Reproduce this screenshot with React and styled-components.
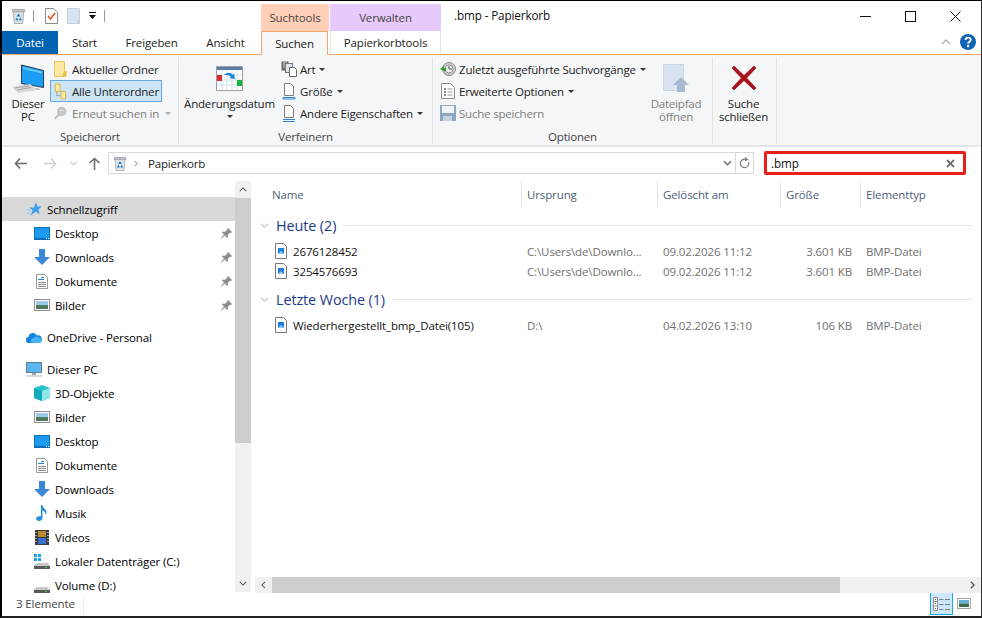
import React from 'react';
import styled, { createGlobalStyle } from 'styled-components';

const Global = createGlobalStyle`
  html, body { margin: 0; padding: 0; background: #fff; overflow: hidden; }
  * { box-sizing: border-box; }
`;

const Win = styled.div`
  width: 982px; height: 618px; display: flex; flex-direction: column;
  background: #fff; overflow: hidden;
  border-top: 1px solid #000; border-left: 2px solid #000; border-right: 1px solid #333; border-bottom: 2px solid #222;
  font-family: "Open Sans", "Noto Sans", sans-serif; font-size: 11.5px; color: #111; letter-spacing: -0.12px;
`;
const TitleBar = styled.div`height: 30px; display: flex; align-items: flex-start; flex: none;`;
const Qat = styled.div`width: 259px; height: 30px; display: flex; align-items: center; padding: 0 0 0 9px;`;
const QatSep = styled.div`width: 1px; height: 12px; background: #9a9a9a; margin: ${p => p.$m};`;
const QatIcon = styled.div`display: flex; margin: ${p => p.$m || 0};`;
const ContextTab = styled.div`
  width: ${p => p.$w}px; height: 27px; margin: 3px ${p => p.$mr || 0}px 0 0; background: ${p => p.$bg};
  display: flex; align-items: center; justify-content: center; color: #444;
`;
const Title = styled.div`margin: 6px 0 0 13px; color: #111; font-size: 11.7px; flex: 1; line-height: 17px;`;
const WinControls = styled.div`display: flex; width: 135px; height: 30px; margin-right: 3px;`;
const WinBtn = styled.div`flex: 1; display: flex; align-items: center; justify-content: center;`;

const TabBar = styled.div`
  height: 24px; flex: none; display: flex; align-items: stretch; border-bottom: 1px solid #f5a46a; position: relative;
`;
const FileTab = styled.div`width: 56px; background: #0063b1; color: #fff; display: flex; align-items: center; justify-content: center; height: 23px;`;
const Tab = styled.div`
  width: ${p => p.$w}px; height: ${p => p.$active ? 24 : 23}px; display: flex; align-items: center; justify-content: center;
  margin-left: ${p => p.$ml || 0}px; color: #222;
  ${p => p.$active && `border: 1px solid #f5a46a; border-bottom: 0; background: #f5f6f7; z-index: 1;`}
  ${p => p.$faint && `border-left: 1px solid #e8e8e8; border-right: 1px solid #e8e8e8;`}
`;
const RibbonRight = styled.div`margin-left: auto; display: flex; align-items: center; gap: 9px; padding: 0 5px 0 0; height: 22px;`;

const Ribbon = styled.div`height: 92px; flex: none; display: flex; background: #f5f6f7; border-bottom: 2px solid #e4e5e6; padding-top: 2px; letter-spacing: -0.2px;`;
const Group = styled.div`
  width: ${p => p.$w}px; height: 87px; flex: none; border-right: 1px solid #e1e2e3; padding-top: 1px;
  display: flex; flex-direction: column;
`;
const GroupBody = styled.div`height: 70px; flex: none; display: flex;`;
const GroupLabel = styled.div`height: 16px; line-height: 18px; flex: none; text-align: center; color: #444;`;
const BigBtn = styled.div`
  width: ${p => p.$w}px; height: 70px; display: flex; flex-direction: column; align-items: center; flex: none;
  color: ${p => p.$off ? '#7d7d7d' : '#222'}; margin-left: ${p => p.$ml || 0}px; text-align: center; line-height: 13px; white-space: nowrap;
`;
const BigIcon = styled.div`height: 39px; padding-top: ${p => p.$t}px; display: flex; justify-content: center; flex: none;`;
const BigCaret = styled.div`display: flex; margin-top: 5px;`;
const Col = styled.div`display: flex; flex-direction: column; flex: none; width: ${p => p.$w}px; margin-left: ${p => p.$ml || 0}px;`;
const SmallBtn = styled.div`
  height: 22px; display: flex; align-items: center; gap: ${p => p.$gap ?? 4}px; padding-left: ${p => p.$pl ?? 4}px; white-space: nowrap;
  color: ${p => p.$off ? '#7d7d7d' : '#222'};
  ${p => p.$sel && `background: #cce4f7; border: 1px solid #66a7e0; padding-left: ${(p.$pl ?? 4) - 1}px;`}
`;
const Caret = styled.span`
  display: inline-block; width: 0; height: 0; border: 3px solid transparent; border-top: 3px solid ${p => p.$off ? '#aaa' : '#333'}; border-bottom: 0;
  margin-left: ${p => p.$ml ?? 1}px;
`;
const SmallIconBox = styled.div`width: ${p => p.$w || 16}px; display: flex; justify-content: center; flex: none;`;

const AddressRow = styled.div`height: 33px; flex: none; display: flex; align-items: center; padding: 0 14px 1px 0;`;
const NavBtns = styled.div`width: 106px; display: flex; align-items: center; padding-left: 12px; flex: none;`;
const NavBtn = styled.div`display: flex; margin-right: ${p => p.$mr}px;`;
const AddressBox = styled.div`
  width: 646px; height: 22px; border: 1px solid #d9d9d9; display: flex; align-items: center; padding-left: 4px; flex: none; color: #222; letter-spacing: -0.2px;
`;
const CrumbSep = styled.div`display: flex; margin-left: 7px;`;
const Crumb = styled.span`margin-left: 10px;`;
const AddressEnd = styled.div`margin-left: auto; display: flex; align-items: center; height: 20px; gap: 3px;`;
const RefreshCell = styled.div`width: 18px; height: 20px; border-left: 1px solid #d9d9d9; display: flex; align-items: center; justify-content: center;`;
const SearchBox = styled.div`
  margin-left: 10px; width: 202px; height: 24px; border: 3px solid #e8201a; border-radius: 2px; display: flex; align-items: center;
  justify-content: space-between; padding: 0 8px 0 4px; color: #111; font-size: 11.7px; flex: none;
`;

const Main = styled.div`flex: 1; min-height: 0; display: flex;`;
const NavPane = styled.div`width: 233px; flex: none; overflow: hidden; padding-top: 17px;`;
const NavRow = styled.div`
  height: 24px; display: flex; align-items: center; position: relative; white-space: nowrap; color: #000;
  padding-left: ${p => p.$l ? 32 : 24}px; margin-top: ${p => p.$gap ? 8 : 0}px; background: ${p => p.$sel ? '#d9d9d9' : 'transparent'};
`;
const NavIcon = styled.div`width: 16px; height: 16px; margin-right: 5px; display: flex; align-items: center; justify-content: center; flex: none;`;
const PinSlot = styled.div`margin-left: auto; margin-right: 3px; display: flex;`;

const VScroll = styled.div`
  width: 16px; flex: none; margin: 1px 0 3px 0; background: #f0f0f0; display: flex; flex-direction: column;
`;
const SBtn = styled.div`height: 17px; display: flex; align-items: center; justify-content: center; flex: none;`;
const VThumb = styled.div`height: 245px; background: #cdcdcd; flex: none;`;
const Grow = styled.div`flex: 1;`;

const Content = styled.div`flex: 1; min-width: 0; margin-left: 2px; display: flex; flex-direction: column; position: relative;`;
const Cols = `display: grid; grid-template-columns: 268px 136px 123px 80px 1fr;`;
const HeaderRow = styled.div`${Cols} height: 25px; margin-top: 2px; flex: none; color: #4c607a;`;
const HeaderCell = styled.div`
  display: flex; align-items: center; padding: 0 0 0 5px; height: 25px;
  ${p => p.$first ? 'padding-left: 19px;' : 'border-left: 1px solid #e5e5e5;'}
`;
const Groups = styled.div`flex: 1; min-height: 0; overflow: hidden;`;
const GroupHead = styled.div`
  height: 24px; display: flex; align-items: center; margin-top: ${p => p.$mt}px; color: #1e3a8a; font-size: 14.4px; letter-spacing: -0.1px; padding: 0 9px 0 7px;
`;
const Chevron = styled.div`width: 16px; display: flex; flex: none;`;
const GroupLine = styled.div`flex: 1; height: 1px; background: #e5e5e5; margin-left: 7px;`;
const FileRow = styled.div`${Cols} height: 20px; align-items: center; margin-top: ${p => p.$mt || 0}px; color: #707070;`;
const NameCell = styled.div`display: flex; align-items: center; padding-left: 22px; color: #111;`;
const FileIconBox = styled.div`display: flex; margin-right: 6px;`;
const Cell = styled.div`padding-left: 6px; text-align: ${p => p.$r ? 'right' : 'left'}; padding-right: ${p => p.$r ? 8 : 0}px;`;
const HScroll = styled.div`height: 16px; margin: 0 0 2px 2px; background: #f0f0f0; flex: none; display: flex; align-items: center;`;
const HBtn = styled.div`width: 17px; height: 16px; display: flex; align-items: center; justify-content: center; flex: none;`;
const HThumb = styled.div`width: 568px; height: 16px; background: #cdcdcd; flex: none;`;

const StatusBar = styled.div`height: 21px; flex: none; display: flex; align-items: flex-start; padding-left: 14px; color: #444;`;
const StatusText = styled.div`width: 68px; border-right: 1px solid #eee; height: 20px; line-height: 17px;`;
const ViewBtns = styled.div`margin: -3px 8px 0 auto; display: flex; align-items: center;`;
const ViewBtn = styled.div`
  width: ${p => p.$w}px; height: 23px; display: flex; align-items: center; justify-content: center; margin-right: ${p => p.$mr || 0}px;
  ${p => p.$on && `background: #cce8ff; border: 1px solid #26a0da;`}
`;

/* ---------- icons ---------- */
const TrashIcon = ({ s = 16 }) => (
  <svg width={s} height={s + 1} viewBox="0 0 16 17">
    <path d="M2.500 3.500h11l-1 13h-9z" fill="#dfe2e5" stroke="#a9adb1" />
    <path d="M1.500 1.500h13v2.500h-13z" fill="#c3c7cb" stroke="#a0a4a8" />
    <path d="M8 6l2.200 3H5.800zM4.500 13l1.700-3 1.700 3zM11.500 13H8.300l1.700-3z" fill="#1878d0" />
  </svg>
);
const CheckDoc = () => (
  <svg width="13" height="16" viewBox="0 0 13 16">
    <path d="M.5.5h8l4 4v11H.5z" fill="#fff" stroke="#8a8a8a" />
    <path d="M3 8l2.500 3L10 5" fill="none" stroke="#e2531c" strokeWidth="1.400" />
  </svg>
);
const BlankDoc = () => (
  <svg width="13" height="16" viewBox="0 0 13 16">
    <path d="M.5.5h12v15H.5z" fill="#d8e2f0" stroke="#c5d2e4" />
    <path d="M10 12h3v4h-3z" fill="#c3cfdf" />
  </svg>
);
const QatCaret = () => (
  <svg width="9" height="8" viewBox="0 0 9 8"><path d="M1 0h7v1H1z" fill="#111" /><path d="M1 3h7L4.500 7z" fill="#111" /></svg>
);
const Minimize = () => <svg width="11" height="11" viewBox="0 0 11 11"><path d="M0 5.500h11" stroke="#111" /></svg>;
const Maximize = () => <svg width="11" height="11" viewBox="0 0 11 11"><rect x=".5" y=".5" width="10" height="10" fill="none" stroke="#111" /></svg>;
const CloseX = () => <svg width="11" height="11" viewBox="0 0 11 11"><path d="M.5.5l10 10M10.500.5l-10 10" stroke="#111" /></svg>;
const HelpIcon = () => (
  <svg width="16" height="16" viewBox="0 0 16 16">
    <circle cx="8" cy="8" r="8" fill="#0f63b4" />
    <path d="M5.500 6c0-3.200 5.200-3.200 5.200-.3 0 2-2.600 2-2.600 4" fill="none" stroke="#fff" strokeWidth="1.800" />
    <rect x="7" y="11" width="2.200" height="2.200" fill="#fff" />
  </svg>
);
const ChevUp = ({ c = '#b0b0b0', w = 10, h = 6 }) => (
  <svg width={w} height={h} viewBox="0 0 10 6"><path d="M1 5l4-4 4 4" fill="none" stroke={c} strokeWidth="1.300" /></svg>
);
const ChevDown = ({ c = '#707070', w = 10, h = 6, sw = 1.3 }) => (
  <svg width={w} height={h} viewBox="0 0 10 6"><path d="M1 1l4 4 4-4" fill="none" stroke={c} strokeWidth={sw} /></svg>
);
const ChevRight = ({ c = '#707070', sw = 1.3, w = 6, h = 10 }) => (
  <svg width={w} height={h} viewBox="0 0 6 10"><path d="M1 1l4 4-4 4" fill="none" stroke={c} strokeWidth={sw} /></svg>
);
const ChevLeft = ({ c = '#707070', sw = 1.3, w = 6, h = 10 }) => (
  <svg width={w} height={h} viewBox="0 0 6 10"><path d="M5 1L1 5l4 4" fill="none" stroke={c} strokeWidth={sw} /></svg>
);
const PcBig = () => (
  <svg width="34" height="29" viewBox="0 0 34 29">
    <path d="M10.500 1l22 5.500v17l-22-4z" fill="#1a9df2" stroke="#2a3f50" strokeWidth="1" />
    <path d="M12 3l19 4.500v2L12 5z" fill="#66c8fb" />
    <path d="M24 24l5 1-1 1-5-1z" fill="#9a9a9a" />
    <path d="M1 23l18-3 8 6-20 3z" fill="#d6d6d6" />
    <path d="M4 24l14-2M6 26l14-2.500" stroke="#a8a8a8" />
  </svg>
);
const FolderOne = () => (
  <svg width="13" height="16" viewBox="0 0 13 16">
    <path d="M.5.5h10v15H.5z" fill="#fde9a3" stroke="#e7c560" />
    <path d="M10 10h2.500v5.500H8z" fill="#f0c040" />
  </svg>
);
const FolderSub = () => (
  <svg width="14" height="17" viewBox="0 0 14 17">
    <path d="M1.500.5h5v8h-5z" fill="#fde9a3" stroke="#d9b040" />
    <path d="M7.500 8.500h5v8h-5z" fill="#fde9a3" stroke="#d9b040" />
    <path d="M3 9v4h4" fill="none" stroke="#999" />
  </svg>
);
const SearchAgain = () => (
  <svg width="16" height="16" viewBox="0 0 16 16">
    <circle cx="9.500" cy="6" r="5" fill="#c8c8c8" stroke="#b3b3b3" />
    <path d="M6 10l-5 5" stroke="#bdbdbd" strokeWidth="2.400" />
    <path d="M7 5h5" stroke="#eee" />
  </svg>
);
const CalendarIcon = () => (
  <svg width="27" height="25" viewBox="0 0 27 25">
    <rect x=".5" y=".5" width="26" height="24" fill="#fff" stroke="#9aa0a6" />
    <rect x="1" y="1" width="25" height="3" fill="#5b7ea8" />
    <path d="M1 9h25M1 14h25M1 19h25M6 4v20M11 4v20M16 4v20M21 4v20" stroke="#cfe0ee" />
    <rect x="1" y="9" width="5" height="6" fill="#d92e2e" />
    <rect x="21" y="14" width="5" height="6" fill="#1db33a" />
    <path d="M8 9c3-3 7-3 9 0l1-2 1 6-6-1 2-1c-2-2-4-2-7-2z" fill="#1e88d8" />
  </svg>
);
const ArtIcon = () => (
  <svg width="16" height="16" viewBox="0 0 16 16">
    <rect x=".5" y=".5" width="7" height="9" fill="#666" />
    <path d="M2 2h4M2 4h4M2 6h4" stroke="#ddd" />
    <rect x="4.500" y="2.500" width="7" height="9" fill="#dfe4ea" stroke="#777" />
    <path d="M8.500 6.500h5l2 2v7h-7z" fill="#fff" stroke="#666" />
  </svg>
);
const DocLine = ({ bar }) => (
  <svg width="14" height="17" viewBox="0 0 14 17">
    <path d="M2.500.5h6l3 3v9h-9z" fill="#fff" stroke="#7d7d7d" />
    {bar ? <path d="M1 14.500h12v1.500H1z" fill="none" stroke="#2c86d6" /> : <path d="M1 14.500h12M1 16.500h12" stroke="#2c86d6" />}
  </svg>
);
const RecentIcon = () => (
  <svg width="16" height="16" viewBox="0 0 16 16">
    <circle cx="9" cy="8" r="6.500" fill="#c9c9c9" stroke="#8a8a8a" />
    <circle cx="9" cy="8" r="4" fill="#eee" stroke="#999" />
    <path d="M9 5v3h3" fill="none" stroke="#555" />
    <path d="M0 8l4-3v2h2l-1 4-1-1z" fill="#2f9e2f" />
  </svg>
);
const OptionsIcon = () => (
  <svg width="14" height="16" viewBox="0 0 14 16">
    <path d="M.5.5h9l4 4v11H.5z" fill="#fff" stroke="#8c8c8c" />
    <path d="M3 6h2M3 9h2M3 12h2" stroke="#666" strokeWidth="1.300" />
    <path d="M6.500 6h5M6.500 9h5M6.500 12h5" stroke="#999" />
  </svg>
);
const SaveIcon = () => (
  <svg width="16" height="16" viewBox="0 0 16 16">
    <rect width="16" height="16" fill="#8ea6c2" />
    <rect x="2" y="1" width="12" height="7" fill="#f2f5f8" />
    <rect x="3" y="11" width="9" height="5" fill="#c9d4e0" />
  </svg>
);
const OpenPath = () => (
  <svg width="27" height="28" viewBox="0 0 27 28">
    <path d="M.5.5h20v26H.5z" fill="#d8e2f0" stroke="#c9d6e7" />
    <path d="M18 13l8 8h-4v7h-8v-7h-4z" fill="#a9bad0" />
  </svg>
);
const BigX = () => (
  <svg width="26" height="26" viewBox="0 0 26 26">
    <path d="M1 3l2-2 10 9.500L23 1l2 2-9.500 10L25 23l-2 2-10-9.500L3 25l-2-2 9.500-10z" fill="#b0121c" stroke="#7e1018" strokeWidth=".7" />
  </svg>
);
const Arrow = ({ dir, c }) => (
  <svg width="13" height="13" viewBox="0 0 13 13">
    {dir === 'left' && <path d="M6 1.500L1.500 6.500 6 11.500M2 6.500h11" fill="none" stroke={c} strokeWidth="1.600" />}
    {dir === 'right' && <path d="M7 1.500l4.500 5L7 11.500M11 6.500H0" fill="none" stroke={c} strokeWidth="1.600" />}
    {dir === 'up' && <path d="M1.500 6L6.500 1.500 11.500 6M6.500 2v11" fill="none" stroke={c} strokeWidth="1.600" />}
  </svg>
);
const Refresh = () => (
  <svg width="11" height="12" viewBox="0 0 11 12">
    <path d="M9.500 5a4.200 4.200 0 1 1-2-2.300" fill="none" stroke="#7a7a7a" strokeWidth="1.200" />
    <path d="M6 0v4.500l3.500-2z" fill="#7a7a7a" />
  </svg>
);
const ClearX = () => <svg width="9" height="9" viewBox="0 0 9 9"><path d="M1 1l7 7M8 1L1 8" stroke="#6e6e6e" strokeWidth="1.800" /></svg>;
const Star = () => (
  <svg width="16" height="15" viewBox="0 0 16 15">
    <path d="M10 0l1.500 4.500H16l-3.600 3 1.300 5-4-3-5 4 2-5.500L3 5.500h5z" fill="#3f9fe8" />
    <path d="M0 8h5M1 11h4" stroke="#8cc8f2" />
  </svg>
);
const Desktop = () => (
  <svg width="16" height="13" viewBox="0 0 16 13">
    <rect width="16" height="13" fill="#0c6fb8" />
    <rect x="1" y="1" width="14" height="10" fill="#1c9af0" />
    <path d="M12 11.500h1M14 11.500h1" stroke="#fff" />
  </svg>
);
const Download = () => (
  <svg width="16" height="16" viewBox="0 0 16 16"><path d="M5 0h6v8h5l-8 8-8-8h5z" fill="#3b87d8" /></svg>
);
const DocIcon = () => (
  <svg width="12" height="15" viewBox="0 0 12 15">
    <path d="M.5.5h8l3 3v11H.5z" fill="#fff" stroke="#9a9a9a" />
    <path d="M2 5.500h3M5 3.500h3M5 5.500h3" stroke="#2a7fd0" />
    <path d="M2 8.500h8M2 10.500h8M2 12.500h8" stroke="#888" />
  </svg>
);
const Pictures = () => (
  <svg width="16" height="12" viewBox="0 0 16 12">
    <rect x=".5" y=".5" width="15" height="11" fill="#fff" stroke="#8e8e8e" />
    <rect x="2" y="2" width="12" height="4" fill="#9ccbe8" />
    <rect x="2" y="6" width="12" height="4" fill="#4d7a5a" />
  </svg>
);
const Cloud = () => (
  <svg width="16" height="11" viewBox="0 0 16 11">
    <path d="M3 11a3 3 0 0 1-.5-6A4.500 4.500 0 0 1 11 3.500 3.800 3.800 0 0 1 13 11z" fill="#1086e0" />
    <path d="M7 11a2.500 2.500 0 0 1 1-5 3 3 0 0 1 5-.5A2.800 2.800 0 0 1 13.500 11z" fill="#49b2f2" />
  </svg>
);
const PcSmall = () => (
  <svg width="16" height="15" viewBox="0 0 16 15">
    <rect x=".5" y=".5" width="15" height="10" fill="#5ab6ee" stroke="#5f7f95" />
    <path d="M6 11h4v2H6z" fill="#9aa7b0" />
    <path d="M0 14h16" stroke="#a7b3bb" />
  </svg>
);
const Cube = () => (
  <svg width="16" height="16" viewBox="0 0 16 16">
    <path d="M8 0l8 3v10l-8 3-8-3V3z" fill="#27c3cf" />
    <path d="M8 6l8-3v10l-8 3z" fill="#8fe6ea" />
    <path d="M0 3l8 3v10l-8-3z" fill="#12a9bd" />
  </svg>
);
const Music = () => (
  <svg width="12" height="16" viewBox="0 0 12 16">
    <path d="M5 0h1.500c0 3 4 4 4 7.500 0 1-.5 1.500-1 2 .2-2-1.500-3.500-3-4V13c0 1.500-1.500 3-3.500 3S0 15 0 13.500 2 11 5 11z" fill="#2a8fe0" />
  </svg>
);
const Film = () => (
  <svg width="14" height="15" viewBox="0 0 14 15">
    <rect width="14" height="15" fill="#3a3a3a" />
    <rect x="3" y="1" width="8" height="6" fill="#b98a30" />
    <rect x="3" y="8" width="8" height="6" fill="#3b6fd0" />
    <path d="M1 2v1M1 5v1M1 8v1M1 11v1M13 2v1M13 5v1M13 8v1M13 11v1" stroke="#fff" />
  </svg>
);
const Drive = ({ win }) => (
  <svg width="16" height="15" viewBox="0 0 16 15">
    {win && <path d="M0 0h3v3H0zM4 0h3v3H4zM0 4h3v3H0zM4 4h3v3H4z" fill="#17a3ea" />}
    <path d="M2 9h12l2 3v3H0v-3z" fill="#c8c8c8" />
    <rect y="12" width="16" height="3" fill="#595959" />
    <rect x="11" y="13" width="2" height="1" fill="#3fd24a" />
  </svg>
);
const Pin = () => (
  <svg width="11" height="11" viewBox="0 0 11 11">
    <path d="M7 0l4 4-1 1-1-.3-2.200 2.200.2 2L6 10 3.600 7.400.8 10.500 0 10l3-3.200L1 4.500l1.200-1 2 .2L6.300 1.500 6 1z" fill="#8f8f8f" />
  </svg>
);
const BmpFile = () => (
  <svg width="12" height="16" viewBox="0 0 12 16">
    <path d="M.5.5h8l3 3v12H.5z" fill="#fff" stroke="#767676" />
    <rect x="3" y="5" width="6" height="6" fill="#1f7fd6" />
    <path d="M3 11l3-3 3 3z" fill="#8cc8f2" />
  </svg>
);
const DetailsView = () => (
  <svg width="17" height="14" viewBox="0 0 17 14">
    <path d="M.5.5h4v13h-4z" fill="#fff" stroke="#8f8f8f" />
    <path d="M.5 4.500h4M.5 9h4" stroke="#8f8f8f" />
    <path d="M2 2h1v1H2zM2 6h1v1H2zM2 11h1v1H2z" fill="#555" />
    <path d="M6 2.500h4.500M12 2.500h5M6 7.500h4.500M12 7.500h5M6 12.500h4.500M12 12.500h5" stroke="#7d7d7d" />
  </svg>
);
const PreviewView = () => (
  <svg width="14" height="11" viewBox="0 0 14 11">
    <rect x=".5" y=".5" width="13" height="10" fill="#fff" stroke="#a5a5a5" />
    <rect x="2" y="2" width="10" height="3.500" fill="#66b0e0" />
    <rect x="2" y="5.500" width="10" height="3.500" fill="#3e6a52" />
  </svg>
);

const navItems = [
  { t: 'Schnellzugriff', i: <Star />, sel: true },
  { t: 'Desktop', i: <Desktop />, l: 1, pin: 1 },
  { t: 'Downloads', i: <Download />, l: 1, pin: 1 },
  { t: 'Dokumente', i: <DocIcon />, l: 1, pin: 1 },
  { t: 'Bilder', i: <Pictures />, l: 1, pin: 1 },
  { t: 'OneDrive - Personal', i: <Cloud />, gap: 1 },
  { t: 'Dieser PC', i: <PcSmall />, gap: 1 },
  { t: '3D-Objekte', i: <Cube />, l: 1 },
  { t: 'Bilder', i: <Pictures />, l: 1 },
  { t: 'Desktop', i: <Desktop />, l: 1 },
  { t: 'Dokumente', i: <DocIcon />, l: 1 },
  { t: 'Downloads', i: <Download />, l: 1 },
  { t: 'Musik', i: <Music />, l: 1 },
  { t: 'Videos', i: <Film />, l: 1 },
  { t: 'Lokaler Datenträger (C:)', i: <Drive win />, l: 1 },
  { t: 'Volume (D:)', i: <Drive />, l: 1 },
];

const FileLine = ({ name, origin, date, size, mt }) => (
  <FileRow $mt={mt}>
    <NameCell><FileIconBox><BmpFile /></FileIconBox>{name}</NameCell>
    <Cell>{origin}</Cell>
    <Cell>{date}</Cell>
    <Cell $r>{size}</Cell>
    <Cell>BMP-Datei</Cell>
  </FileRow>
);

const Fold = () => <Chevron><ChevDown c="#8a8a8a" w={9} h={5} sw={1} /></Chevron>;

export default function App() {
  return (
    <Win>
      <Global />
      <TitleBar>
        <Qat>
          <QatIcon><TrashIcon s={15} /></QatIcon>
          <QatSep $m="0 0 0 7px" />
          <QatIcon $m="0 0 0 11px"><CheckDoc /></QatIcon>
          <QatIcon $m="0 0 0 9px"><BlankDoc /></QatIcon>
          <QatIcon $m="0 0 0 8px"><QatCaret /></QatIcon>
          <QatSep $m="0 0 0 7px" />
        </Qat>
        <ContextTab $w={68} $mr={1} $bg="#ffcfb8">Suchtools</ContextTab>
        <ContextTab $w={111} $bg="#e8c9fb">Verwalten</ContextTab>
        <Title>.bmp - Papierkorb</Title>
        <WinControls>
          <WinBtn><Minimize /></WinBtn>
          <WinBtn><Maximize /></WinBtn>
          <WinBtn><CloseX /></WinBtn>
        </WinControls>
      </TitleBar>
      <TabBar>
        <FileTab>Datei</FileTab>
        <Tab $w={53}>Start</Tab>
        <Tab $w={81}>Freigeben</Tab>
        <Tab $w={67}>Ansicht</Tab>
        <Tab $w={67} $ml={2} $active>Suchen</Tab>
        <Tab $w={111} $ml={2} $faint>Papierkorbtools</Tab>
        <RibbonRight>
          <ChevUp />
          <HelpIcon />
        </RibbonRight>
      </TabBar>
      <Ribbon>
        <Group $w={177}>
          <GroupBody>
            <BigBtn $w={52}>
              <BigIcon $t={6}><PcBig /></BigIcon>
              <div>Dieser<br />PC</div>
            </BigBtn>
            <Col $w={112} $ml={-4}>
              <SmallBtn $gap={5}><SmallIconBox $w={13}><FolderOne /></SmallIconBox>Aktueller Ordner</SmallBtn>
              <SmallBtn $sel $gap={5}><SmallIconBox $w={13}><FolderSub /></SmallIconBox>Alle Unterordner</SmallBtn>
              <SmallBtn $off $gap={5}><SmallIconBox $w={13}><SearchAgain /></SmallIconBox>Erneut suchen in <Caret $off /></SmallBtn>
            </Col>
          </GroupBody>
          <GroupLabel>Speicherort</GroupLabel>
        </Group>
        <Group $w={254}>
          <GroupBody>
            <BigBtn $w={97} $ml={2}>
              <BigIcon $t={8}><CalendarIcon /></BigIcon>
              <div>Änderungsdatum</div>
              <BigCaret><Caret $ml={0} /></BigCaret>
            </BigBtn>
            <Col $w={150} $ml={1}>
              <SmallBtn $pl={2} $gap={3}><SmallIconBox><ArtIcon /></SmallIconBox>Art <Caret /></SmallBtn>
              <SmallBtn $pl={2} $gap={3}><SmallIconBox><DocLine bar /></SmallIconBox>Größe <Caret /></SmallBtn>
              <SmallBtn $pl={2} $gap={3}><SmallIconBox><DocLine /></SmallIconBox>Andere Eigenschaften <Caret /></SmallBtn>
            </Col>
          </GroupBody>
          <GroupLabel>Verfeinern</GroupLabel>
        </Group>
        <Group $w={280}>
          <GroupBody>
            <Col $w={210} $ml={5}>
              <SmallBtn $pl={2} $gap={3}><SmallIconBox><RecentIcon /></SmallIconBox>Zuletzt ausgeführte Suchvorgänge <Caret /></SmallBtn>
              <SmallBtn $pl={2} $gap={3}><SmallIconBox><OptionsIcon /></SmallIconBox>Erweiterte Optionen <Caret /></SmallBtn>
              <SmallBtn $pl={2} $off $gap={3}><SmallIconBox><SaveIcon /></SmallIconBox>Suche speichern</SmallBtn>
            </Col>
            <BigBtn $w={56} $off>
              <BigIcon $t={6}><OpenPath /></BigIcon>
              <div>Dateipfad<br />öffnen</div>
            </BigBtn>
          </GroupBody>
          <GroupLabel>Optionen</GroupLabel>
        </Group>
        <Group $w={64}>
          <GroupBody>
            <BigBtn $w={61}>
              <BigIcon $t={7}><BigX /></BigIcon>
              <div>Suche<br />schließen</div>
            </BigBtn>
          </GroupBody>
        </Group>
      </Ribbon>
      <AddressRow>
        <NavBtns>
          <NavBtn $mr={17}><Arrow dir="left" c="#6d6d6d" /></NavBtn>
          <NavBtn $mr={13}><Arrow dir="right" c="#d0d0d0" /></NavBtn>
          <NavBtn $mr={11}><ChevDown c="#9a9a9a" w={7} h={5} /></NavBtn>
          <NavBtn $mr={0}><Arrow dir="up" c="#6d6d6d" /></NavBtn>
        </NavBtns>
        <AddressBox>
          <TrashIcon s={14} />
          <CrumbSep><ChevRight w={4} h={7} /></CrumbSep>
          <Crumb>Papierkorb</Crumb>
          <AddressEnd>
            <ChevDown sw={1.6} w={9} h={6} />
            <RefreshCell><Refresh /></RefreshCell>
          </AddressEnd>
        </AddressBox>
        <SearchBox>.bmp<ClearX /></SearchBox>
      </AddressRow>
      <Main>
        <NavPane>
          {navItems.map((n, i) => (
            <NavRow key={i} $l={n.l} $gap={n.gap} $sel={n.sel}>
              <NavIcon>{n.i}</NavIcon>
              {n.t}
              {n.pin && <PinSlot><Pin /></PinSlot>}
            </NavRow>
          ))}
        </NavPane>
        <VScroll>
          <SBtn><ChevUp c="#555" w={8} h={5} /></SBtn>
          <VThumb />
          <Grow />
          <SBtn><ChevDown c="#555" w={8} h={5} /></SBtn>
        </VScroll>
        <Content>
          <HeaderRow>
            <HeaderCell $first>Name</HeaderCell>
            <HeaderCell>Ursprung</HeaderCell>
            <HeaderCell>Gelöscht am</HeaderCell>
            <HeaderCell>Größe</HeaderCell>
            <HeaderCell>Elementtyp</HeaderCell>
          </HeaderRow>
          <Groups>
            <GroupHead $mt={6}><Fold />Heute (2)<GroupLine /></GroupHead>
            <FileLine mt={4} name="2676128452" origin="C:\Users\de\Downlo..." date="09.02.2026 11:12" size="3.601 KB" />
            <FileLine name="3254576693" origin="C:\Users\de\Downlo..." date="09.02.2026 11:12" size="3.601 KB" />
            <GroupHead $mt={6}><Fold />Letzte Woche (1)<GroupLine /></GroupHead>
            <FileLine mt={4} name="Wiederhergestellt_bmp_Datei(105)" origin="D:\" date="04.02.2026 13:10" size="106 KB" />
          </Groups>
          <HScroll>
            <HBtn><ChevLeft c="#555" w={5} h={8} /></HBtn>
            <HThumb />
            <Grow />
            <HBtn><ChevRight c="#555" w={5} h={8} sw={1.6} /></HBtn>
          </HScroll>
        </Content>
      </Main>
      <StatusBar>
        <StatusText>3 Elemente</StatusText>
        <ViewBtns>
          <ViewBtn $w={23} $on $mr={2}><DetailsView /></ViewBtn>
          <ViewBtn $w={18}><PreviewView /></ViewBtn>
        </ViewBtns>
      </StatusBar>
    </Win>
  );
}
